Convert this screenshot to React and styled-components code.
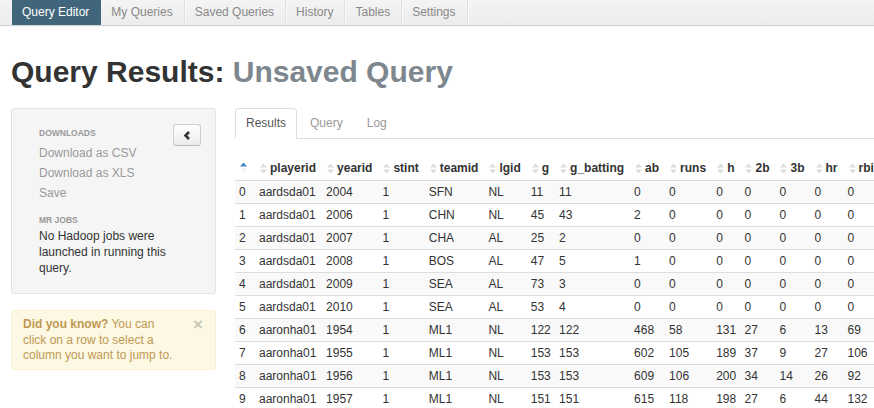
import React from "react";
import styled, { createGlobalStyle } from "styled-components";

const GlobalStyle = createGlobalStyle`
  html, body {
    margin: 0;
    padding: 0;
    overflow: hidden;
    background: #fff;
  }
  body {
    font-family: "Liberation Sans", Arial, Helvetica, sans-serif;
    font-size: 12px;
    color: #333;
  }
`;

const NavBar = styled.div`
  display: flex;
  height: 25px;
  padding-left: 12px;
  background: linear-gradient(#f4f4f4, #ececec);
  border-bottom: 1px solid #d6d6d6;
  box-shadow: 0 1px 0 #f4f4f4;
`;

const NavTab = styled.div`
  padding: 0 11px 0 10px;
  line-height: 24px;
  font-size: 12px;
  color: ${(p) => (p.$active ? "#fff" : "#888")};
  background: ${(p) => (p.$active ? "#41667b" : "transparent")};
  border-right: 1px solid ${(p) => (p.$active ? "#41667b" : "#e0e0e0")};
  box-shadow: ${(p) => (p.$active ? "none" : "1px 0 0 #f9f9f9")};
  white-space: nowrap;
`;

const Container = styled.div`
  padding-left: 11px;
`;

const Title = styled.h1`
  margin: 28px 0 18px;
  font-size: 30px;
  line-height: 36px;
  font-weight: bold;
  color: #333;
  white-space: nowrap;
`;

const Muted = styled.span`
  color: #7d878d;
`;

const Row = styled.div`
  display: flex;
  gap: 19px;
  align-items: flex-start;
`;

const Sidebar = styled.div`
  flex: 0 0 205px;
  display: flex;
  flex-direction: column;
  gap: 16px;
`;

const Well = styled.div`
  box-sizing: border-box;
  background: #f5f5f5;
  border: 1px solid #e3e3e3;
  border-radius: 3px;
  padding: 15px 14px 17px 27px;
`;

const WellTop = styled.div`
  display: flex;
  justify-content: space-between;
  align-items: flex-start;
`;

const NavHeader = styled.div`
  margin-top: ${(p) => p.$top || 0}px;
  font-size: 8.5px;
  line-height: 14px;
  font-weight: bold;
  text-transform: uppercase;
  color: #999;
`;

const NavList = styled.div`
  display: flex;
  flex-direction: column;
  margin-top: 3px;
`;

const NavLink = styled.a`
  font-size: 12px;
  line-height: 20px;
  color: #999;
  text-decoration: none;
  cursor: pointer;
`;

const CollapseButton = styled.button`
  box-sizing: border-box;
  width: 28px;
  height: 22px;
  padding: 0;
  display: flex;
  align-items: center;
  justify-content: center;
  background: linear-gradient(#ffffff, #ececec);
  border: 1px solid #cfcfcf;
  border-bottom-color: #bbb;
  border-radius: 3px;
  cursor: pointer;
`;

const JobsText = styled.p`
  margin: 1px 0 0;
  padding-right: 14px;
  font-size: 12px;
  line-height: 16px;
  color: #333;
`;

const Alert = styled.div`
  position: relative;
  background: #fcf8e3;
  border: 1px solid #fbeed5;
  border-radius: 3px;
  padding: 6px 35px 5px 11px;
  font-size: 12px;
  line-height: 15.5px;
  color: #c09853;
`;

const Close = styled.span`
  position: absolute;
  top: 5px;
  right: 12px;
  font-size: 17px;
  line-height: 17px;
  font-weight: bold;
  color: #000;
  opacity: 0.2;
  cursor: pointer;
`;

const Main = styled.div`
  flex: 1;
  min-width: 0;
`;

const Tabs = styled.div`
  display: flex;
  gap: 2px;
  border-bottom: 1px solid #ddd;
`;

const Tab = styled.div`
  margin-bottom: -1px;
  padding: 7px 10px 8px;
  font-size: 12px;
  line-height: 14px;
  color: ${(p) => (p.$active ? "#555" : "#999")};
  background: ${(p) => (p.$active ? "#fff" : "transparent")};
  border: 1px solid ${(p) => (p.$active ? "#ddd" : "transparent")};
  border-bottom-color: transparent;
  border-radius: 4px 4px 0 0;
`;

const Table = styled.table`
  margin-top: 18px;
  border-collapse: collapse;
  font-size: 12px;
  white-space: nowrap;
`;

const Th = styled.th`
  padding: 4px ${(p) => (p.$index ? 8 : 6)}px 3px 5px;
  line-height: 14px;
  text-align: left;
  font-weight: bold;
  color: #333;
`;

const HeadInner = styled.span`
  display: inline-flex;
  align-items: center;
  gap: 3px;
`;

const Tr = styled.tr`
  background: ${(p) => (p.$striped ? "#f9f9f9" : "#fff")};
`;

const Td = styled.td`
  padding: 4px 3px 4px 4px;
  line-height: 14px;
  border-top: 1px solid #ddd;
  color: #333;
`;

const SortIcon = ({ active }) => (
  <svg width="7" height="11" viewBox="0 0 7 11">
    <path d="M0 4.5 L3.5 0.5 L7 4.5 Z" fill={active ? "#3f85c4" : "#dcdcdc"} />
    <path d="M0 6.5 L3.5 10.5 L7 6.5 Z" fill={active ? "#f2f2f2" : "#dcdcdc"} />
  </svg>
);

const ChevronLeft = () => (
  <svg width="8" height="9" viewBox="0 0 8 9">
    <path d="M6 1 L2.5 4.5 L6 8" fill="none" stroke="#333" strokeWidth="2.6" />
  </svg>
);

const columns = [
  "playerid", "yearid", "stint", "teamid", "lgid", "g", "g_batting",
  "ab", "runs", "h", "2b", "3b", "hr", "rbi",
];

const rows = [
  ["aardsda01", 2004, 1, "SFN", "NL", 11, 11, 0, 0, 0, 0, 0, 0, 0],
  ["aardsda01", 2006, 1, "CHN", "NL", 45, 43, 2, 0, 0, 0, 0, 0, 0],
  ["aardsda01", 2007, 1, "CHA", "AL", 25, 2, 0, 0, 0, 0, 0, 0, 0],
  ["aardsda01", 2008, 1, "BOS", "AL", 47, 5, 1, 0, 0, 0, 0, 0, 0],
  ["aardsda01", 2009, 1, "SEA", "AL", 73, 3, 0, 0, 0, 0, 0, 0, 0],
  ["aardsda01", 2010, 1, "SEA", "AL", 53, 4, 0, 0, 0, 0, 0, 0, 0],
  ["aaronha01", 1954, 1, "ML1", "NL", 122, 122, 468, 58, 131, 27, 6, 13, 69],
  ["aaronha01", 1955, 1, "ML1", "NL", 153, 153, 602, 105, 189, 37, 9, 27, 106],
  ["aaronha01", 1956, 1, "ML1", "NL", 153, 153, 609, 106, 200, 34, 14, 26, 92],
  ["aaronha01", 1957, 1, "ML1", "NL", 151, 151, 615, 118, 198, 27, 6, 44, 132],
];

const navItems = ["Query Editor", "My Queries", "Saved Queries", "History", "Tables", "Settings"];

const App = () => {
  return (
    <>
      <GlobalStyle />
      <NavBar>
        {navItems.map((item, i) => (
          <NavTab key={item} $active={i === 0}>
            {item}
          </NavTab>
        ))}
      </NavBar>
      <Container>
        <Title>
          Query Results: <Muted>Unsaved Query</Muted>
        </Title>
        <Row>
          <Sidebar>
            <Well>
              <WellTop>
                <div>
                  <NavHeader $top={2}>Downloads</NavHeader>
                  <NavList>
                    <NavLink>Download as CSV</NavLink>
                    <NavLink>Download as XLS</NavLink>
                    <NavLink>Save</NavLink>
                  </NavList>
                </div>
                <CollapseButton>
                  <ChevronLeft />
                </CollapseButton>
              </WellTop>
              <NavHeader $top={10}>MR Jobs</NavHeader>
              <JobsText>No Hadoop jobs were launched in running this query.</JobsText>
            </Well>
            <Alert>
              <Close>×</Close>
              <strong>Did you know?</strong> You can click on a row to select a
              column you want to jump to.
            </Alert>
          </Sidebar>
          <Main>
            <Tabs>
              <Tab $active>Results</Tab>
              <Tab>Query</Tab>
              <Tab>Log</Tab>
            </Tabs>
            <Table>
              <thead>
                <tr>
                  <Th $index>
                    <HeadInner>
                      <SortIcon active />
                    </HeadInner>
                  </Th>
                  {columns.map((c) => (
                    <Th key={c}>
                      <HeadInner>
                        <SortIcon />
                        {c}
                      </HeadInner>
                    </Th>
                  ))}
                </tr>
              </thead>
              <tbody>
                {rows.map((r, i) => (
                  <Tr key={i} $striped={i % 2 === 0}>
                    <Td>{i}</Td>
                    {r.map((v, j) => (
                      <Td key={j}>{v}</Td>
                    ))}
                  </Tr>
                ))}
              </tbody>
            </Table>
          </Main>
        </Row>
      </Container>
    </>
  );
};

export default App;
